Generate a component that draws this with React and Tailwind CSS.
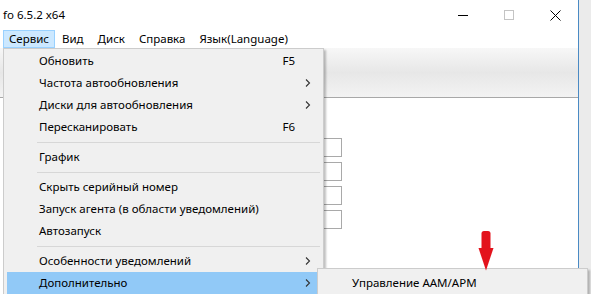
const menuBar = ['Сервис', 'Вид', 'Диск', 'Справка', 'Язык(Language)'];

const items = [
  { label: 'Обновить', key: 'F5' },
  { label: 'Частота автообновления', sub: true },
  { label: 'Диски для автообновления', sub: true },
  { label: 'Пересканировать', key: 'F6' },
  { sep: true },
  { label: 'График' },
  { sep: true },
  { label: 'Скрыть серийный номер' },
  { label: 'Запуск агента (в области уведомлений)' },
  { label: 'Автозапуск' },
  { sep: true },
  { label: 'Особенности уведомлений', sub: true },
  { label: 'Дополнительно', sub: true, active: true },
];

function Arrow() {
  return (
    <svg width="8" height="10" viewBox="0 0 8 10" className="text-[#333]">
      <path d="M2 1.5 L5.5 5 L2 8.5" fill="none" stroke="currentColor" strokeWidth="1.1" />
    </svg>
  );
}

export default function App() {
  return (
    <div className="w-[591px] h-[294px] overflow-hidden bg-[#ebebeb] flex font-['Noto_Sans',sans-serif] text-[11.5px] text-black">
      {/* Window */}
      <div className="relative w-[579px] h-full bg-white border-r border-[#4a8ac4] flex flex-col">
        {/* Title bar */}
        <div className="h-[30px] flex items-center justify-between pl-[3px]">
          <span>fo 6.5.2 x64</span>
          <div className="flex items-center h-full">
            <div className="w-[46px] h-full flex items-center justify-center">
              <div className="w-[10px] h-px bg-black" />
            </div>
            <div className="w-[46px] h-full flex items-center justify-center">
              <div className="w-[10px] h-[10px] border border-[#c4c4c4]" />
            </div>
            <div className="w-[46px] h-full flex items-center justify-center">
              <svg width="11" height="11" viewBox="0 0 11 11">
                <path d="M0.5 0.5 L10.5 10.5 M10.5 0.5 L0.5 10.5" stroke="#000" strokeWidth="1" />
              </svg>
            </div>
          </div>
        </div>

        {/* Menu bar */}
        <div className="h-[18px] flex items-stretch pl-[3px] leading-none">
          {menuBar.map((m, i) => (
            <div
              key={m}
              className={
                i === 0
                  ? 'px-[5px] flex items-center bg-[#cce8ff] border border-[#99d1ff]'
                  : 'px-[6px] flex items-center border border-transparent'
              }
            >
              {m}
            </div>
          ))}
        </div>

        {/* Toolbar */}
        <div className="h-[50px] bg-gradient-to-b from-[#f7f7f7] via-[#e7e7e7] to-[#f3f3f3] border-b border-[#a8a8a8]" />

        {/* Content */}
        <div className="flex-1 pt-[40px] pl-[200px] flex flex-col gap-[5px]">
          {[0, 1, 2, 3].map((n) => (
            <div key={n} className="w-[142px] h-[19px] border border-[#a9a9a9] bg-white" />
          ))}
        </div>

        {/* Dropdown menu */}
        <div className="absolute left-[3px] top-[48px] w-[321px] bg-[#f0f0f0] border border-[#cccccc] shadow-[2px_2px_2px_rgba(0,0,0,0.25)] py-[1px] px-[3px]">
          {items.map((it, i) =>
            it.sep ? (
              <div key={i} className="h-[8px] flex items-center pl-[30px]">
                <div className="w-full h-px bg-[#d7d7d7]" />
              </div>
            ) : (
              <div
                key={i}
                className={
                  'h-[22px] flex items-center pl-[32px] pr-[8px] ' +
                  (it.active ? 'bg-[#91c9f7]' : '')
                }
              >
                <span className="flex-1">{it.label}</span>
                {it.key && <span className="mr-[17px]">{it.key}</span>}
                {it.sub && <Arrow />}
              </div>
            )
          )}
        </div>

        {/* Submenu */}
        <div className="absolute left-[317px] top-[268px] w-[271px] h-[40px] bg-[#f0f0f0] border border-[#cccccc] shadow-[2px_2px_2px_rgba(0,0,0,0.25)] pt-[3px]">
          <div className="h-[22px] flex items-center pl-[34px]">Управление AAM/APM</div>
        </div>

        {/* Red arrow */}
        <svg className="absolute left-[478px] top-[231px]" width="16" height="40" viewBox="0 0 16 40">
          <rect x="3.5" y="0" width="9" height="20" rx="2.5" fill="#e3121c" />
          <path d="M0.5 17 L15.5 17 L8 39.5 Z" fill="#e3121c" />
        </svg>
      </div>
    </div>
  );
}
